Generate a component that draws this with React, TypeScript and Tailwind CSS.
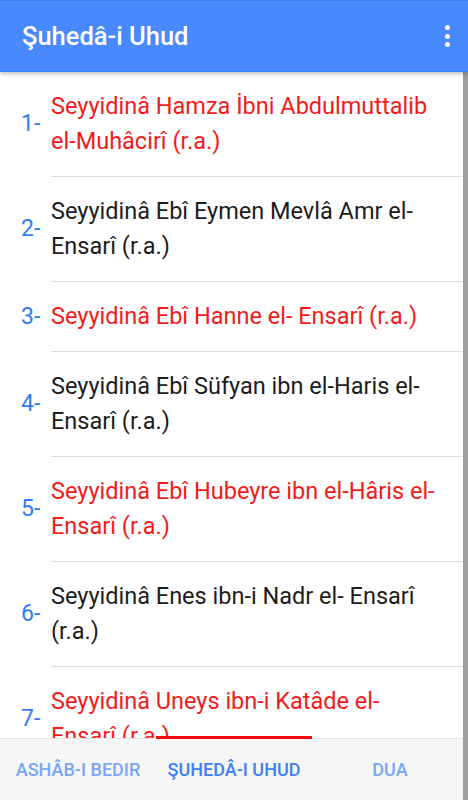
const items = [
  { n: "1-", red: true, lines: ["Seyyidinâ Hamza İbni Abdulmuttalib", "el-Muhâcirî (r.a.)"] },
  { n: "2-", red: false, lines: ["Seyyidinâ Ebî Eymen Mevlâ Amr el-", "Ensarî (r.a.)"] },
  { n: "3-", red: true, lines: ["Seyyidinâ Ebî Hanne el- Ensarî (r.a.)"] },
  { n: "4-", red: false, lines: ["Seyyidinâ Ebî Süfyan ibn el-Haris el-", "Ensarî (r.a.)"] },
  { n: "5-", red: true, lines: ["Seyyidinâ Ebî Hubeyre ibn el-Hâris el-", "Ensarî (r.a.)"] },
  { n: "6-", red: false, lines: ["Seyyidinâ Enes ibn-i Nadr el- Ensarî", "(r.a.)"] },
  { n: "7-", red: true, lines: ["Seyyidinâ Uneys ibn-i Katâde el-", "Ensarî (r.a.)"] },
  { n: "8-", red: false, lines: ["Seyyidinâ Abdullah ibn Cübeyr el-", "Ensarî (r.a.)"] },
];

const App = () => {
  return (
    <div className="w-[468px] h-[800px] flex flex-col bg-white relative overflow-hidden font-['Roboto',sans-serif]">
      <div className="h-[72px] shrink-0 bg-[#4889fe] border-t border-[#3f7de8] border-b border-b-[#2a84ff] flex items-center justify-between pl-[22px] pr-[18px] relative z-10 shadow-[0_2px_4px_rgba(0,0,0,0.25)]">
        <h1 className="text-white text-[25.5px] font-medium">Şuhedâ-i Uhud</h1>
        <div className="flex flex-col gap-[3.5px] items-center">
          <span className="w-[5px] h-[5px] rounded-full bg-white" />
          <span className="w-[5px] h-[5px] rounded-full bg-white" />
          <span className="w-[5px] h-[5px] rounded-full bg-white" />
        </div>
      </div>

      <div className="flex-1 overflow-hidden">
        {items.map((it) => (
          <div key={it.n} className="flex">
            <div className="w-[51px] shrink-0 pl-[21px] flex items-center text-[23px] text-[#2f7df6]">
              {it.n}
            </div>
            <div
              className={
                "flex-1 pt-[17px] pb-[17px] border-b border-[#dcdcdc] text-[23.5px] leading-[35px] whitespace-nowrap " +
                (it.red ? "text-[#f41a1a]" : "text-[#1c1c1c]")
              }
            >
              {it.lines.map((l) => (
                <div key={l}>{l}</div>
              ))}
            </div>
          </div>
        ))}
      </div>

      <div className="h-[62px] shrink-0 bg-[#f6f6f6] border-t border-[#e4e4e4] flex relative">
        <div className="absolute -top-[3px] left-[156px] w-[156px] h-[3px] bg-[#f80d0d]" />
        <div className="w-[156px] flex items-center justify-center text-[18px] font-medium text-[#79a6f6]">ASHÂB-I BEDIR</div>
        <div className="w-[156px] flex items-center justify-center text-[18px] font-medium text-[#3b80f4]">ŞUHEDÂ-I UHUD</div>
        <div className="w-[156px] flex items-center justify-center text-[18px] font-medium text-[#79a6f6]">DUA</div>
      </div>

      <div className="absolute right-0 top-[72px] bottom-0 w-[5px] bg-[#9e9e9e]" />
    </div>
  );
};

export default App;
